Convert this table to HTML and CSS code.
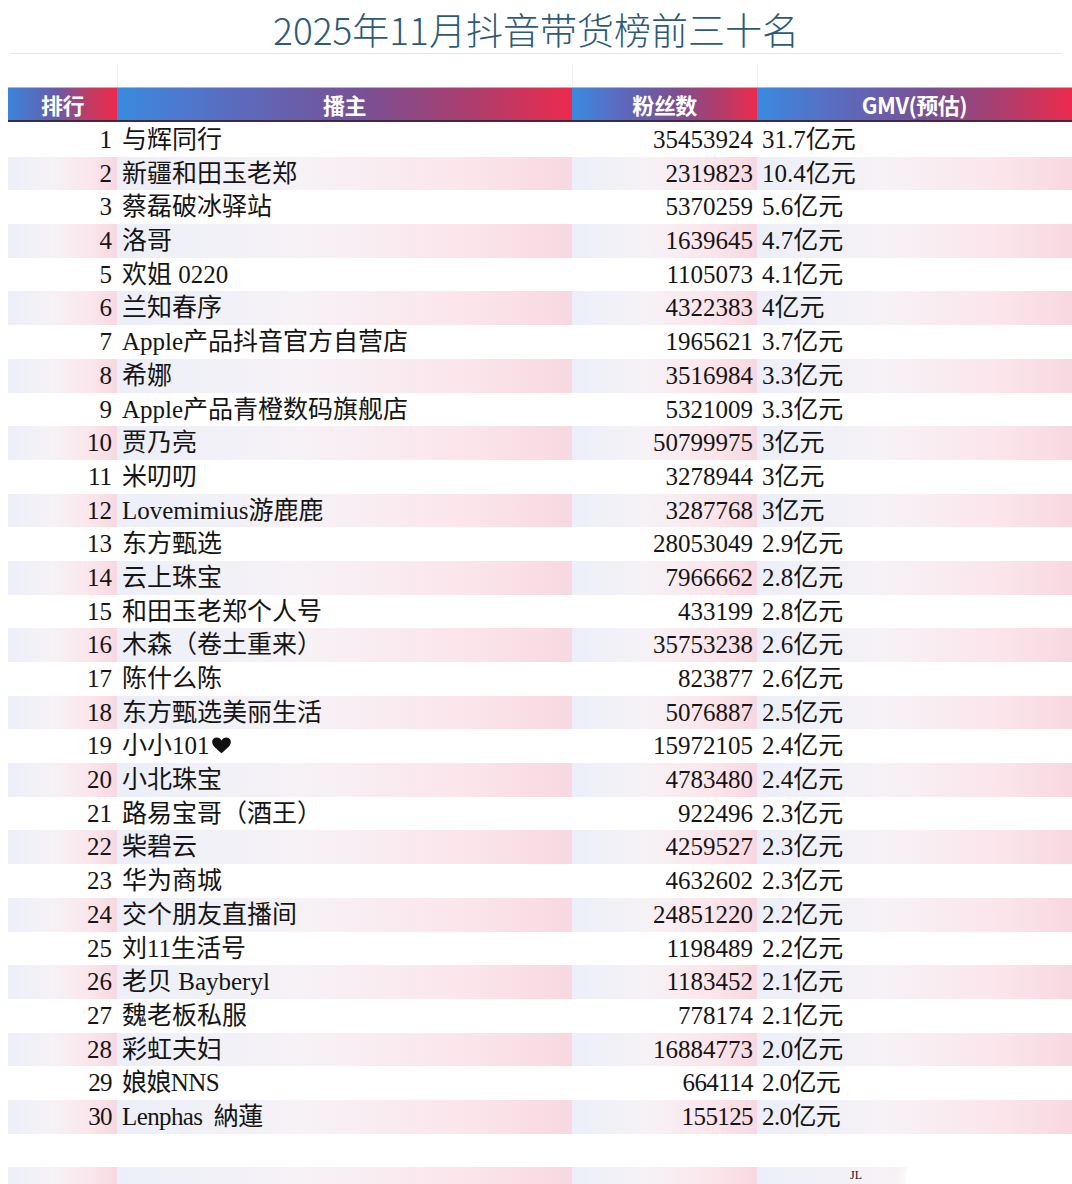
FILE: index.html
```html
<!DOCTYPE html>
<html lang="zh">
<head>
<meta charset="utf-8">
<title>2025年11月抖音带货榜前三十名</title>
<link rel="stylesheet" href="styles.css">
</head>
<body>
<div class="page">
  <h1 class="title">2025年11月抖音带货榜前三十名</h1>
  <div class="spacer">
    <div></div><div></div><div></div><div></div>
  </div>
  <div class="head">
    <div class="hc">排行</div>
    <div class="hc">播主</div>
    <div class="hc">粉丝数</div>
    <div class="hc">GMV(预估)</div>
  </div>
  <div class="rows">
    <div class="row"><div class="c rank">1</div><div class="c name">与辉同行</div><div class="c fans">35453924</div><div class="c gmv">31.7亿元</div></div>
    <div class="row"><div class="c rank">2</div><div class="c name">新疆和田玉老郑</div><div class="c fans">2319823</div><div class="c gmv">10.4亿元</div></div>
    <div class="row"><div class="c rank">3</div><div class="c name">蔡磊破冰驿站</div><div class="c fans">5370259</div><div class="c gmv">5.6亿元</div></div>
    <div class="row"><div class="c rank">4</div><div class="c name">洛哥</div><div class="c fans">1639645</div><div class="c gmv">4.7亿元</div></div>
    <div class="row"><div class="c rank">5</div><div class="c name">欢姐 0220</div><div class="c fans">1105073</div><div class="c gmv">4.1亿元</div></div>
    <div class="row"><div class="c rank">6</div><div class="c name">兰知春序</div><div class="c fans">4322383</div><div class="c gmv">4亿元</div></div>
    <div class="row"><div class="c rank">7</div><div class="c name">Apple产品抖音官方自营店</div><div class="c fans">1965621</div><div class="c gmv">3.7亿元</div></div>
    <div class="row"><div class="c rank">8</div><div class="c name">希娜</div><div class="c fans">3516984</div><div class="c gmv">3.3亿元</div></div>
    <div class="row"><div class="c rank">9</div><div class="c name">Apple产品青橙数码旗舰店</div><div class="c fans">5321009</div><div class="c gmv">3.3亿元</div></div>
    <div class="row"><div class="c rank">10</div><div class="c name">贾乃亮</div><div class="c fans">50799975</div><div class="c gmv">3亿元</div></div>
    <div class="row"><div class="c rank">11</div><div class="c name">米叨叨</div><div class="c fans">3278944</div><div class="c gmv">3亿元</div></div>
    <div class="row"><div class="c rank">12</div><div class="c name">Lovemimius游鹿鹿</div><div class="c fans">3287768</div><div class="c gmv">3亿元</div></div>
    <div class="row"><div class="c rank">13</div><div class="c name">东方甄选</div><div class="c fans">28053049</div><div class="c gmv">2.9亿元</div></div>
    <div class="row"><div class="c rank">14</div><div class="c name">云上珠宝</div><div class="c fans">7966662</div><div class="c gmv">2.8亿元</div></div>
    <div class="row"><div class="c rank">15</div><div class="c name">和田玉老郑个人号</div><div class="c fans">433199</div><div class="c gmv">2.8亿元</div></div>
    <div class="row"><div class="c rank">16</div><div class="c name">木森（卷土重来）</div><div class="c fans">35753238</div><div class="c gmv">2.6亿元</div></div>
    <div class="row"><div class="c rank">17</div><div class="c name">陈什么陈</div><div class="c fans">823877</div><div class="c gmv">2.6亿元</div></div>
    <div class="row"><div class="c rank">18</div><div class="c name">东方甄选美丽生活</div><div class="c fans">5076887</div><div class="c gmv">2.5亿元</div></div>
    <div class="row"><div class="c rank">19</div><div class="c name">小小101<svg class="heart" viewBox="0 0 24 20" width="21" height="17"><path d="M12 19 C5 13 1 10 1 5.5 C1 2.5 3.5 0.5 6.3 0.5 C8.7 0.5 10.8 2 12 4 C13.2 2 15.3 0.5 17.7 0.5 C20.5 0.5 23 2.5 23 5.5 C23 10 19 13 12 19 Z" fill="#111"/></svg></div><div class="c fans">15972105</div><div class="c gmv">2.4亿元</div></div>
    <div class="row"><div class="c rank">20</div><div class="c name">小北珠宝</div><div class="c fans">4783480</div><div class="c gmv">2.4亿元</div></div>
    <div class="row"><div class="c rank">21</div><div class="c name">路易宝哥（酒王）</div><div class="c fans">922496</div><div class="c gmv">2.3亿元</div></div>
    <div class="row"><div class="c rank">22</div><div class="c name">柴碧云</div><div class="c fans">4259527</div><div class="c gmv">2.3亿元</div></div>
    <div class="row"><div class="c rank">23</div><div class="c name">华为商城</div><div class="c fans">4632602</div><div class="c gmv">2.3亿元</div></div>
    <div class="row"><div class="c rank">24</div><div class="c name">交个朋友直播间</div><div class="c fans">24851220</div><div class="c gmv">2.2亿元</div></div>
    <div class="row"><div class="c rank">25</div><div class="c name">刘11生活号</div><div class="c fans">1198489</div><div class="c gmv">2.2亿元</div></div>
    <div class="row"><div class="c rank">26</div><div class="c name">老贝 Bayberyl</div><div class="c fans">1183452</div><div class="c gmv">2.1亿元</div></div>
    <div class="row"><div class="c rank">27</div><div class="c name">魏老板私服</div><div class="c fans">778174</div><div class="c gmv">2.1亿元</div></div>
    <div class="row"><div class="c rank">28</div><div class="c name">彩虹夫妇</div><div class="c fans">16884773</div><div class="c gmv">2.0亿元</div></div>
    <div class="row narrow"><div class="c rank">29</div><div class="c name">娘娘NNS</div><div class="c fans">664114</div><div class="c gmv">2.0亿元</div></div>
    <div class="row narrow"><div class="c rank">30</div><div class="c name">Lenphas&nbsp; 納蓮</div><div class="c fans">155125</div><div class="c gmv">2.0亿元</div></div>
    <div class="row"><div class="c"></div><div class="c"></div><div class="c"></div><div class="c"></div></div>
    <div class="row"><div class="c"></div><div class="c"></div><div class="c"></div><div class="c gmv"><span class="partial">JL</span></div></div>
  </div>
  <div class="overlay"></div>
</div>
</body>
</html>
```

FILE: styles.css
```css
html, body {
  margin: 0;
  padding: 0;
  background: #ffffff;
}

.page {
  position: relative;
  width: 1072px;
  height: 1184px;
  overflow: hidden;
  font-family: "Liberation Serif", "Noto Sans CJK SC", serif;
  color: #151515;
}

.title {
  margin: 0 10px 0 10px;
  height: 53px;
  border-bottom: 1px solid #e6e6e6;
  text-align: center;
  font-family: "Noto Sans CJK SC", sans-serif;
  font-weight: 300;
  font-size: 37px;
  line-height: 58px;
  color: #2c5a78;
  letter-spacing: 0;
}

.spacer {
  display: grid;
  grid-template-columns: 109px 455px 185px 1fr;
  margin-left: 8px;
  height: 33px;
}
.spacer div {
  border-left: 1px solid #f0f0f0;
  margin-top: 10px;
}
.spacer div:first-child {
  border-left: none;
}

.head {
  display: grid;
  grid-template-columns: 109px 455px 185px 1fr;
  margin-left: 8px;
  height: 32px;
  border-top: 1px solid #b9b0c8;
  border-bottom: 2px solid #3a2c44;
}

.hc {
  background: linear-gradient(to right, #3a8ae0 0%, #5a6cc0 25%, #7a4f92 55%, #b23c6a 80%, #ec2a4c 100%);
  color: #ffffff;
  text-align: center;
  font-family: "Noto Sans CJK SC", sans-serif;
  font-weight: 700;
  font-size: 22px;
  line-height: 32px;
  letter-spacing: -0.5px;
}
.hc:first-child {
  background: linear-gradient(to right, #3a86dc 0%, #6a5aa8 45%, #c23a62 75%, #ec2a4c 100%);
}

.rows {
  margin-top: 1px;
}

.row {
  display: grid;
  grid-template-columns: 109px 455px 185px 1fr;
  margin-left: 8px;
  height: 33.7px;
}

.row:nth-child(even) .c {
  background: linear-gradient(to right, #eceff9 0%, #f6f2f6 40%, #fbe6ec 75%, #f8d8e1 100%);
}

.c {
  font-size: 25px;
  line-height: 33.7px;
  white-space: nowrap;
  overflow: hidden;
}

.rank {
  text-align: right;
  padding-right: 5px;
}

.name {
  padding-left: 5px;
}

.fans {
  text-align: right;
  padding-right: 4px;
}

.gmv {
  padding-left: 5px;
}

.heart {
  vertical-align: 0;
  margin-left: 1px;
}

.narrow .c {
  letter-spacing: -0.6px;
}

.partial {
  display: inline-block;
  margin-left: 88px;
  font-size: 12px;
  line-height: 14px;
  vertical-align: top;
  margin-top: 1px;
}

.overlay {
  position: absolute;
  left: 906px;
  top: 1150px;
  width: 200px;
  height: 60px;
  background: #ffffff;
  border-top-left-radius: 30px;
  box-shadow: -4px -2px 10px rgba(255, 255, 255, 0.9);
}
```
